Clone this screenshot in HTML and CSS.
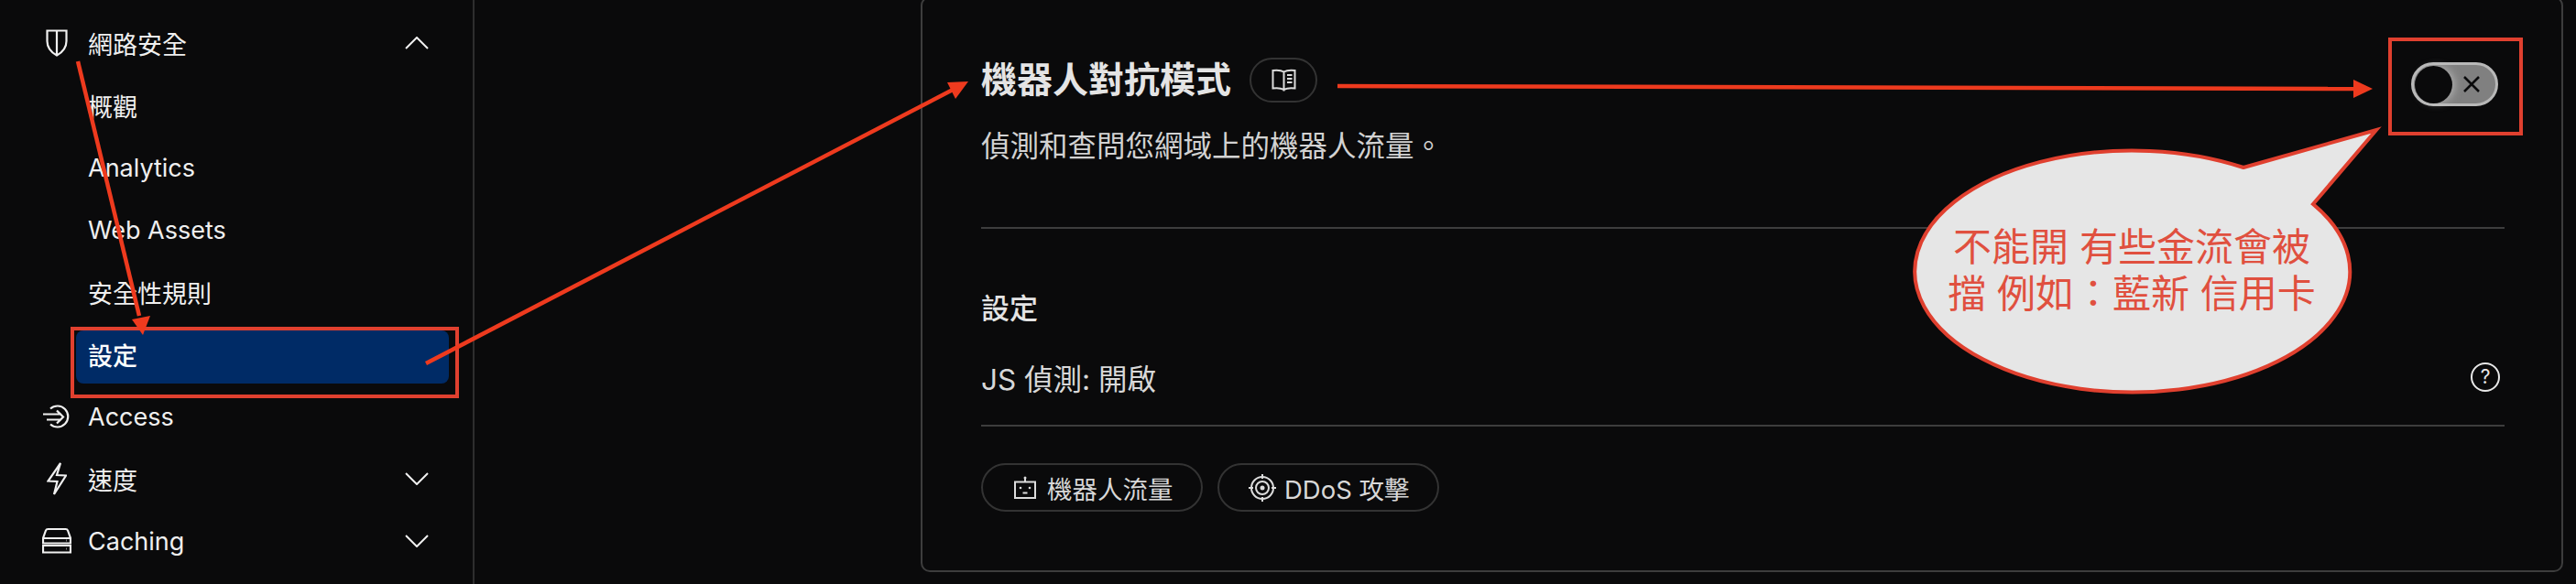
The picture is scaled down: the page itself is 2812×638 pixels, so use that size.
FILE: index.html
```html
<!DOCTYPE html>
<html lang="zh-Hant">
<head>
    <meta charset="UTF-8">
    <title>機器人對抗模式</title>
    <link rel="stylesheet" href="styles.css">
</head>
<body>
    <aside class="sidebar">
        <nav class="nav">
            <a class="nav-item">
                <span class="nav-icon">
                    <svg class="stroke" width="24" height="30" viewBox="0 0 24 30"><path d="M1.500 1.500H22.500V13C22.500 20 17.500 25.500 12 28.500C6.500 25.500 1.500 20 1.500 13ZM12 1.500V28.500"/></svg>
                </span>
                <span class="nav-label">網路安全</span>
                <svg class="chevron" width="26" height="14" viewBox="0 0 26 14"><path d="M1 13L13 1L25 13"/></svg>
            </a>
            <a class="nav-item">
                <span class="nav-icon"></span>
                <span class="nav-label">概觀</span>
            </a>
            <a class="nav-item">
                <span class="nav-icon"></span>
                <span class="nav-label">Analytics</span>
            </a>
            <a class="nav-item">
                <span class="nav-icon"></span>
                <span class="nav-label">Web Assets</span>
            </a>
            <a class="nav-item">
                <span class="nav-icon"></span>
                <span class="nav-label">安全性規則</span>
            </a>
            <a class="nav-item active">
                <span class="nav-icon"></span>
                <span class="nav-label">設定</span>
            </a>
            <a class="nav-item">
                <span class="nav-icon">
                    <svg class="stroke" width="32" height="26" viewBox="0 0 32 26"><path d="M9 4.500A11.500 11.500 0 1 1 9 21.500M1 10.500H21M5 16.500H21M16 6.500L23 13.500L16 20.500"/></svg>
                </span>
                <span class="nav-label">Access</span>
            </a>
            <a class="nav-item">
                <span class="nav-icon">
                    <svg class="stroke" width="22" height="36" viewBox="0 0 22 36"><path d="M15 1L1.500 20.500L11.500 21L8 35L21 14.500L11 14Z"/></svg>
                </span>
                <span class="nav-label">速度</span>
                <svg class="chevron" width="26" height="14" viewBox="0 0 26 14"><path d="M1 1L13 13L25 1"/></svg>
            </a>
            <a class="nav-item">
                <span class="nav-icon">
                    <svg class="stroke" width="32" height="30" viewBox="0 0 32 30"><path d="M1 12L4 3.500Q4.500 2 6.500 2H25.500Q27.500 2 28 3.500L31 12V17.500H1ZM1 12H31M1 20H31V27.500H1ZM26 14.500H26.500M26 23.500H26.500"/></svg>
                </span>
                <span class="nav-label">Caching</span>
                <svg class="chevron" width="26" height="14" viewBox="0 0 26 14"><path d="M1 1L13 13L25 1"/></svg>
            </a>
        </nav>
    </aside>

    <main class="main">
        <section class="card">
            <div class="card-head">
                <div>
                    <div class="title-row">
                        <h1 class="title">機器人對抗模式</h1>
                        <a class="doc-button">
                            <svg class="stroke thin" width="27" height="25" viewBox="0 0 27 25"><path d="M13.500 3.500C11 2 6 1.500 1.500 2V21.500C6 21 11 21.500 13.500 23C16 21.500 21 21 25.500 21.500V2C21 1.500 16 2 13.500 3.500ZM13.500 3.500V24.500M17 7H22.500M17 11H22.500M17 15H22.500"/></svg>
                        </a>
                    </div>
                    <p class="desc">偵測和查問您網域上的機器人流量。</p>
                </div>
                <div class="toggle">
                    <span class="toggle-knob"></span>
                    <svg class="toggle-x" width="20" height="20" viewBox="0 0 20 20"><path d="M2 2L18 18M18 2L2 18"/></svg>
                </div>
            </div>

            <hr class="divider first">

            <h2 class="section-title">設定</h2>
            <div class="setting-row">
                <span>JS 偵測: 開啟</span>
                <span class="help">?</span>
            </div>
            <hr class="divider">

            <div class="chips">
                <a class="chip">
                    <svg class="stroke thin" width="24" height="26" viewBox="0 0 24 26"><path d="M1 6.500H23V24H1ZM12 1.500V6.500M9.500 18.500H14.500"/><circle class="dot" cx="12" cy="2" r="1.500"/><circle class="dot" cx="7" cy="13" r="1.300"/><circle class="dot" cx="17" cy="13" r="1.300"/></svg>
                    機器人流量
                </a>
                <a class="chip chip-target">
                    <svg class="stroke thin" width="30" height="30" viewBox="0 0 30 30"><circle cx="15" cy="15" r="12"/><circle cx="15" cy="15" r="7"/><circle class="dot" cx="15" cy="15" r="2.500"/><path d="M15 0V5M15 25V30M0 15H5M25 15H30"/></svg>
                    DDoS 攻擊
                </a>
            </div>
        </section>
    </main>

    <!-- annotations drawn on top of the screenshot -->
    <svg class="marks" width="2812" height="638" viewBox="0 0 2812 638">
        <rect class="box" x="79" y="359" width="420" height="74"/>
        <rect class="box" x="2609" y="43" width="143" height="103"/>
        <path class="line" d="M85 67L152 345"/>
        <path class="head" d="M156 366L144 349L164 345Z"/>
        <path class="line" d="M465 397L1040 98"/>
        <path class="head" d="M1057 89L1034 90L1043 108Z"/>
        <path class="line" d="M1460 94L2572 97"/>
        <path class="head" d="M2590 97L2569 87V107Z"/>
    </svg>

    <div class="callout">
        <svg class="callout-shape" width="530" height="300" viewBox="2085 135 530 300">
            <path d="M2449 183L2594 142L2525 223A237.500 132 0 1 1 2449 183Z"/>
        </svg>
        <p class="callout-text">不能開 有些金流會被<br>擋 例如：藍新 信用卡</p>
    </div>
</body>
</html>
```

FILE: styles.css
```css
* {
    margin: 0;
    padding: 0;
    box-sizing: border-box;
    font-family: 'Inter', 'Noto Sans CJK TC', sans-serif;
}

body {
    background-color: #0a0a0b;
    color: #e4e4e4;
    display: flex;
    width: 2812px;
    height: 638px;
    overflow: hidden;
    position: relative;
}

.stroke {
    fill: none;
    stroke: #f0f0f0;
    stroke-width: 2.2;
}

.stroke.thin {
    stroke: #dcdcdc;
    stroke-width: 2;
}

.stroke .dot {
    fill: #dcdcdc;
    stroke: none;
}

/* sidebar */
.sidebar {
    width: 518px;
    flex-shrink: 0;
    border-right: 2px solid #2e2e2e;
    padding-top: 13px;
}

.nav {
    display: flex;
    flex-direction: column;
    padding-right: 26px;
}

.nav-item {
    display: flex;
    align-items: center;
    height: 68px;
    font-size: 27px;
    color: #efefef;
    padding-right: 22px;
}

.nav-icon {
    width: 96px;
    flex-shrink: 0;
    display: flex;
    justify-content: center;
    padding: 0 2px 0 30px;
}

.nav-label {
    flex: 1;
}

.chevron {
    fill: none;
    stroke: #f0f0f0;
    stroke-width: 2;
}

.nav-item.active {
    background-color: #002b66;
    border-radius: 8px;
    font-weight: 500;
    color: #fff;
    height: 58px;
    margin: 8px 0 2px 83px;
    padding-bottom: 6px;
}

.nav-item.active .nav-icon {
    width: 13px;
    padding: 0;
}

/* main card */
.main {
    flex: 1;
}

.card {
    height: 629px;
    margin: -4px 14px 0 487px;
    border: 2px solid #3d3d3d;
    border-radius: 10px;
    padding: 64px 62px 0 64px;
}

.card-head {
    display: flex;
    justify-content: space-between;
    align-items: flex-start;
}

.title-row {
    display: flex;
    align-items: center;
    gap: 20px;
    height: 50px;
}

.title {
    font-size: 39px;
    font-weight: 700;
    line-height: 50px;
}

.doc-button {
    width: 74px;
    height: 49px;
    border: 2px solid #333;
    border-radius: 25px;
    display: flex;
    justify-content: center;
    align-items: center;
}

.desc {
    margin-top: 26px;
    font-size: 31.5px;
    line-height: 44px;
    color: #d2d2d2;
}

.toggle {
    width: 95px;
    height: 48px;
    margin: 6px 7px 0 0;
    border: 3px solid #b8b8b8;
    border-radius: 24px;
    background-color: #808080;
    display: flex;
    align-items: center;
    justify-content: space-between;
    padding: 0 16px 0 0;
}

.toggle-knob {
    width: 41px;
    height: 41px;
    margin-left: 1px;
    border-radius: 50%;
    background-color: #0a0a0b;
    box-shadow: 3px 0 8px rgba(210, 210, 210, 0.55);
}

.toggle-x {
    fill: none;
    stroke: #0a0a0b;
    stroke-width: 2.5;
}

.divider {
    border: none;
    height: 2px;
    background-color: #3d3d3d;
    margin-top: 27px;
}

.divider.first {
    margin-top: 66px;
}

.section-title {
    margin-top: 65px;
    font-size: 31px;
    font-weight: 500;
    line-height: 44px;
}

.setting-row {
    margin-top: 28px;
    height: 50px;
    display: flex;
    justify-content: space-between;
    align-items: center;
    font-size: 31.5px;
    color: #d8d8d8;
}

.help {
    width: 32px;
    height: 32px;
    margin-right: 5px;
    border: 2px solid #e8e8e8;
    border-radius: 50%;
    font-size: 21px;
    line-height: 28px;
    text-align: center;
    color: #e8e8e8;
}

.chips {
    display: flex;
    gap: 16px;
    margin-top: 40px;
}

.chip {
    display: flex;
    align-items: center;
    gap: 12px;
    width: 242px;
    height: 53px;
    padding-left: 34px;
    border: 2px solid #333;
    border-radius: 27px;
    font-size: 27.5px;
    color: #d8d8d8;
}

.chip-target {
    padding-left: 32px;
    gap: 9px;
}

/* annotations */
.marks {
    position: absolute;
    top: 0;
    left: 0;
}

.box {
    fill: none;
    stroke: #e0402f;
    stroke-width: 4;
}

.line {
    fill: none;
    stroke: #ee3a1e;
    stroke-width: 4.5;
}

.head {
    fill: #ee3a1e;
}

.callout {
    position: absolute;
    left: 2085px;
    top: 163px;
    width: 484px;
    height: 264px;
    display: flex;
    justify-content: center;
    align-items: center;
}

.callout-shape {
    position: absolute;
    left: 0;
    top: -28px;
}

.callout-shape path {
    fill: #e6e6e6;
    stroke: #e0402f;
    stroke-width: 4;
}

.callout-text {
    position: relative;
    font-size: 42px;
    line-height: 51px;
    text-align: center;
    white-space: nowrap;
    color: #e0503f;
}
```
